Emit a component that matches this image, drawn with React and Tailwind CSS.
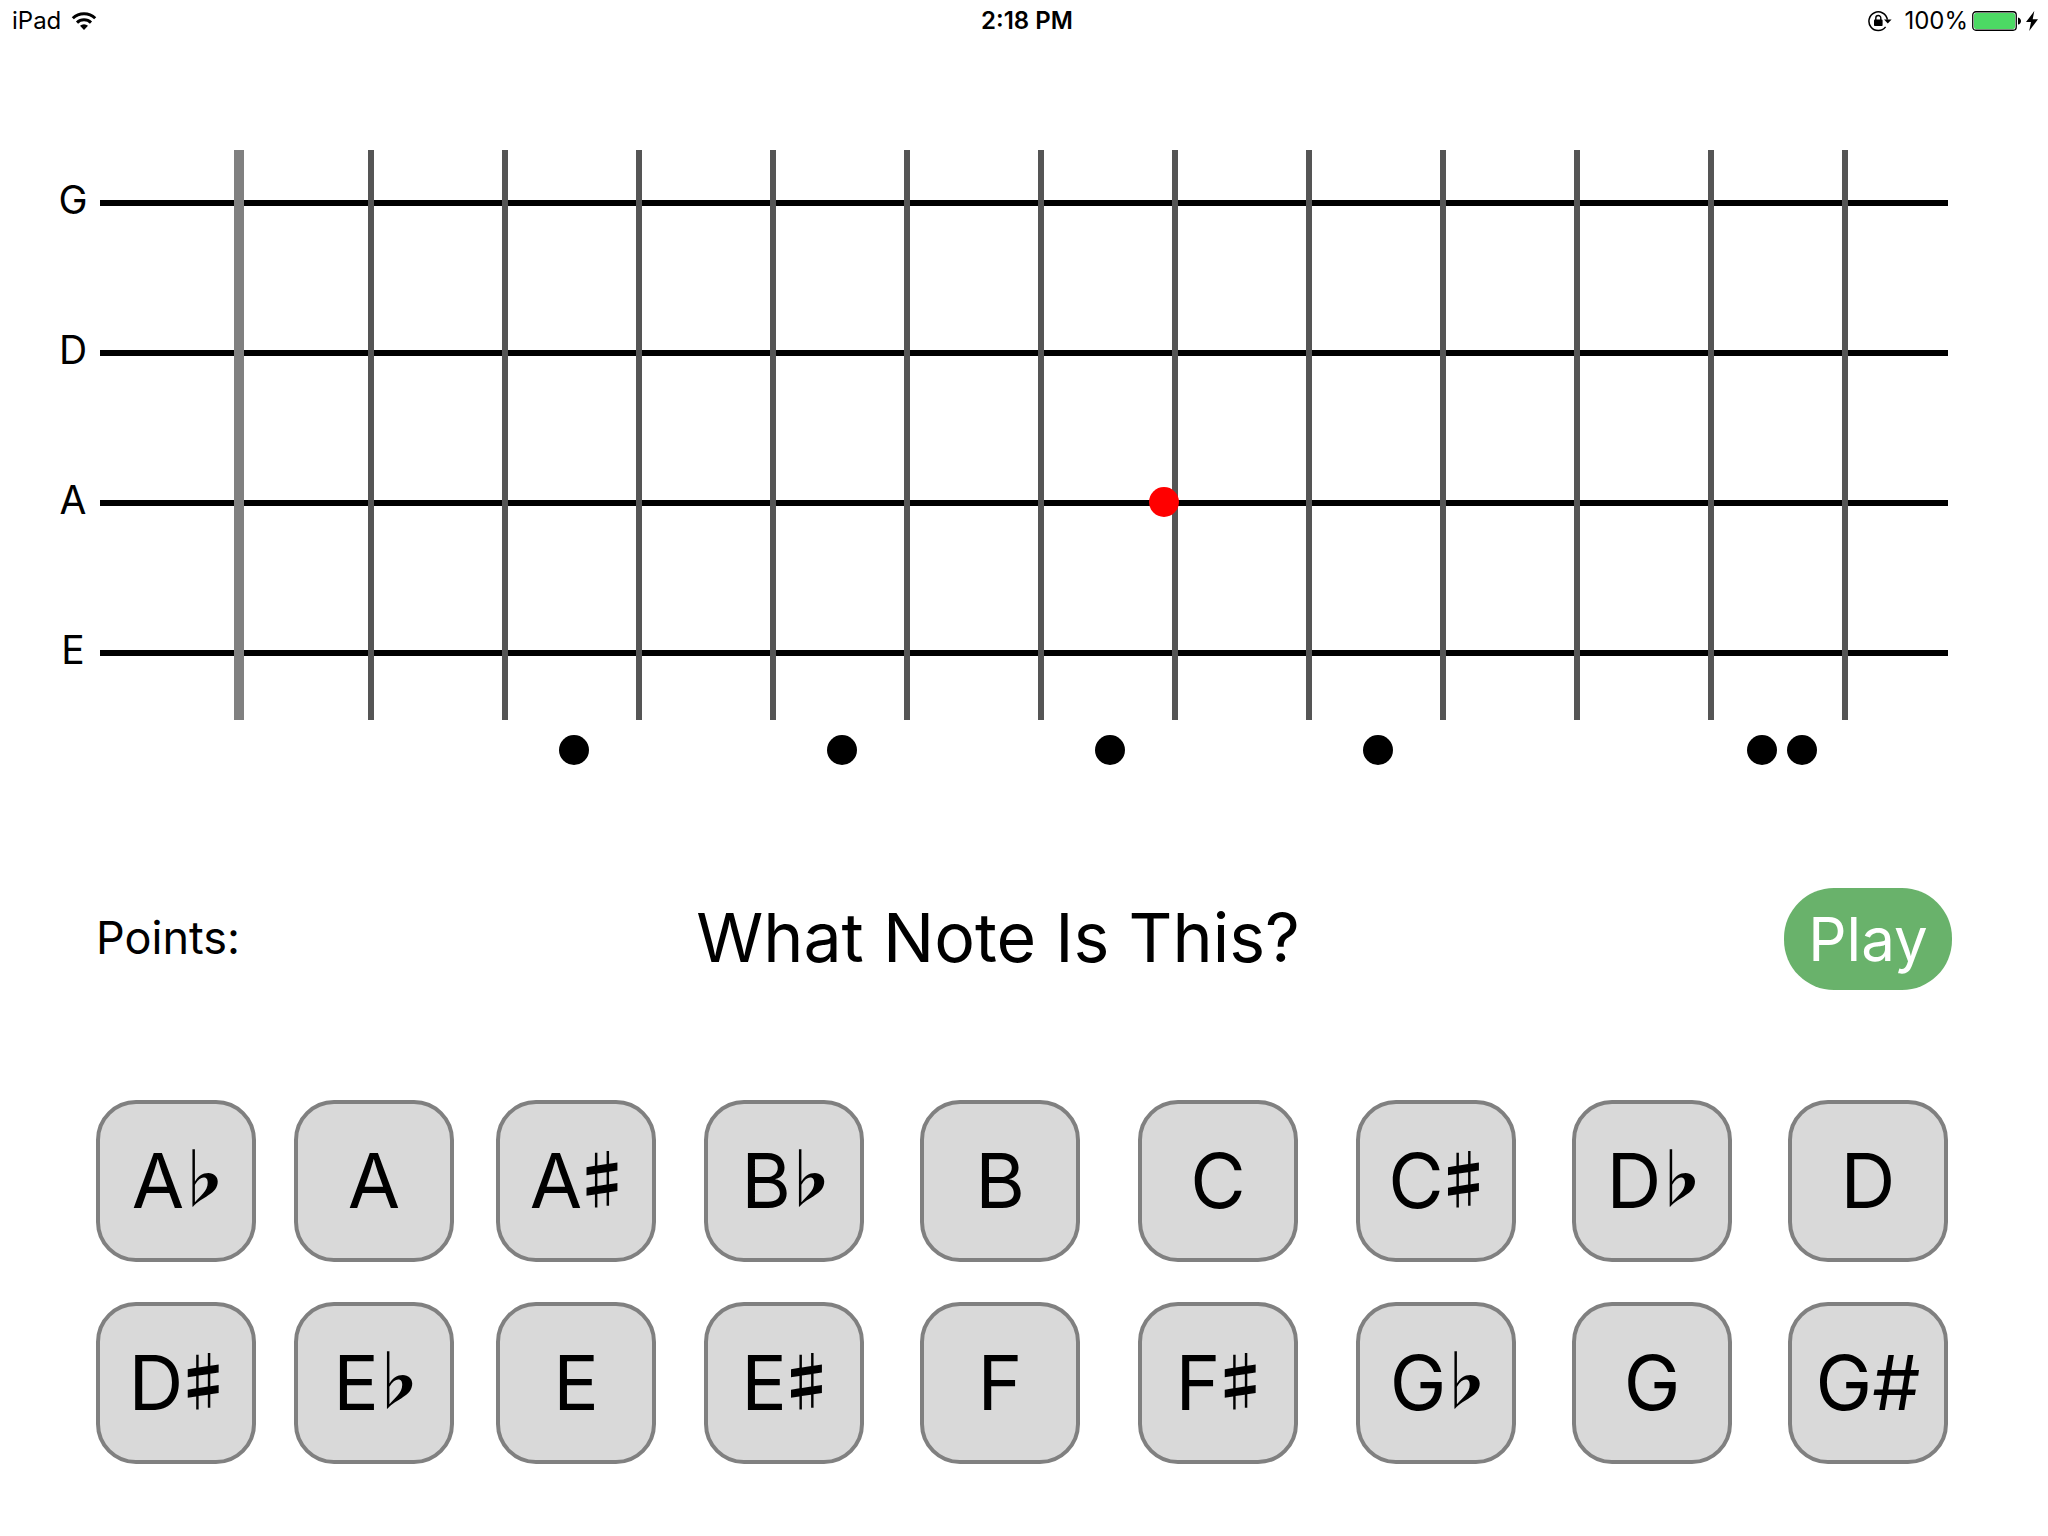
import React from "react";

const strings = ["G", "D", "A", "E"];
// Number of inlay dots shown under each fret space.
const inlays = [0, 0, 1, 0, 1, 0, 1, 0, 1, 0, 0, 2];
const targetSpace = 6;
const notes = [
  "A♭", "A", "A♯", "B♭", "B", "C", "C♯", "D♭", "D",
  "D♯", "E♭", "E", "E♯", "F", "F♯", "G♭", "G", "G#",
];

function WifiIcon() {
  return (
    <svg width="26" height="20" viewBox="0 0 26 20" aria-hidden="true">
      <g fill="none" stroke="#000" strokeWidth="3">
        <path d="M1.8 7.2a16 16 0 0 1 22.4 0" />
        <path d="M6 11.6a10 10 0 0 1 14 0" />
      </g>
      <path d="M13 19l-4-4.2a5.8 5.8 0 0 1 8 0z" />
    </svg>
  );
}

function RotationLockIcon() {
  return (
    <svg width="24" height="22" viewBox="0 0 24 22" aria-hidden="true">
      <path d="M17.6 16.9A9.3 9.3 0 1 1 19.4 9.6" fill="none" stroke="#000" strokeWidth="1.5" />
      <path d="M16 9.6h7.6L19.8 13.6z" />
      <rect x="6" y="9.6" width="8.6" height="6.4" rx="0.8" />
      <path d="M7.8 10V8a2.5 2.5 0 0 1 5 0v2" fill="none" stroke="#000" strokeWidth="1.4" />
    </svg>
  );
}

function BatteryIcon() {
  return (
    <svg width="50" height="20" viewBox="0 0 50 20" aria-hidden="true">
      <rect x="0.75" y="0.75" width="43.5" height="18.5" rx="3.2" fill="#fff" stroke="#000" strokeWidth="1.3" />
      <rect x="2" y="2" width="41" height="16" rx="2" fill="#4cd964" />
      <path d="M46 6.4c4 1 4 6.200 0 7.200z" />
    </svg>
  );
}

function BoltIcon() {
  return (
    <svg width="12" height="20" viewBox="0 0 12 20" aria-hidden="true">
      <path d="M8.300 0L0 11h5L3.200 20L12 8.300H6.700z" />
    </svg>
  );
}

function StatusBar() {
  return (
    <header className="grid h-[42px] grid-cols-3 items-center pl-3 pr-2.5 text-[24px] leading-none">
      <div className="flex items-center gap-2.5">
        <span>iPad</span>
        <WifiIcon />
      </div>
      <div className="pl-1 text-center font-semibold">2:18 PM</div>
      <div className="flex items-center justify-end">
        <RotationLockIcon />
        <span className="ml-3 mr-1">100%</span>
        <BatteryIcon />
        <span className="ml-1"><BoltIcon /></span>
      </div>
    </header>
  );
}

function Fretboard() {
  return (
    <section className="mt-[86px]" aria-label="Fretboard">
      <div className="relative h-[592px]">
        <div className="flex flex-col">
          {strings.map((name) => (
            <div key={name} className="flex h-[150px] items-center pr-[100px]">
              <span className="w-[100px] pb-2 pl-[46px] text-center text-[39px] leading-none">{name}</span>
              <span className="h-1.5 flex-1 bg-black" />
            </div>
          ))}
        </div>
        <div className="absolute left-[234px] right-[200px] top-[22px] flex h-[570px]">
          <div className="grid flex-1 grid-cols-12">
            {inlays.map((_, i) => (
              <div
                key={i}
                className={
                  i === 0
                    ? "relative border-l-[10px] border-[#808080]"
                    : "relative border-l-[6px] border-[#555555]"
                }
              >
                {i === targetSpace && (
                  <span className="absolute -right-[7px] top-[337px] z-10 size-[30px] rounded-full bg-[#ff0000]" />
                )}
              </div>
            ))}
          </div>
          <div className="w-1.5 bg-[#555555]" />
        </div>
      </div>
      <div className="ml-[234px] mr-[206px] mt-[15px] grid h-[30px] grid-cols-12">
        {inlays.map((count, i) => (
          <div
            key={i}
            className={count === 2 ? "flex justify-center gap-2.5 pl-3.5" : "flex justify-center pl-2.5"}
          >
            {Array.from({ length: count }, (_, d) => (
              <span key={d} className="size-[30px] rounded-full bg-black" />
            ))}
          </div>
        ))}
      </div>
    </section>
  );
}

function NoteName({ note }) {
  const [letter, accidental] = note;
  if (!accidental || accidental === "#") return note;
  return (
    <>
      {letter}
      <span
        className={
          accidental === "♭"
            ? "inline-flex w-9 justify-center align-[6px] font-['Noto_Sans_CJK_JP',sans-serif] text-[62px] font-black leading-[0]"
            : "inline-flex w-10 justify-center align-[5px] font-['Noto_Sans_CJK_JP',sans-serif] text-[62px] font-black leading-[0]"
        }
      >
        {accidental}
      </span>
    </>
  );
}

export default function App() {
  return (
    <main className="min-h-screen bg-white font-['Inter',sans-serif] text-black">
      <StatusBar />
      <Fretboard />
      <section className="mt-[123px] grid grid-cols-[1fr_auto_1fr] items-center px-24">
        <p className="pb-1 text-[45px] leading-none">Points:</p>
        <h1 className="mr-[52px] pb-1 text-[68px] leading-none">What Note Is This?</h1>
        <button type="button" className="h-[102px] w-[168px] justify-self-end rounded-[50px] bg-[#69b26b] text-[60px] leading-none text-white">
          Play
        </button>
      </section>
      <section
        aria-label="Notes"
        className="mt-[110px] grid grid-cols-[198fr_202fr_208fr_216fr_218fr_218fr_216fr_216fr_160fr] gap-y-10 pb-[72px] pl-24 pr-[100px]"
      >
        {notes.map((note) => (
          <button
            key={note}
            type="button"
            className="h-[162px] w-[160px] whitespace-nowrap rounded-[40px] border-4 border-[#808080] bg-[#d9d9d9] pb-0.5 text-[76px] leading-none"
          >
            <NoteName note={note} />
          </button>
        ))}
      </section>
    </main>
  );
}
